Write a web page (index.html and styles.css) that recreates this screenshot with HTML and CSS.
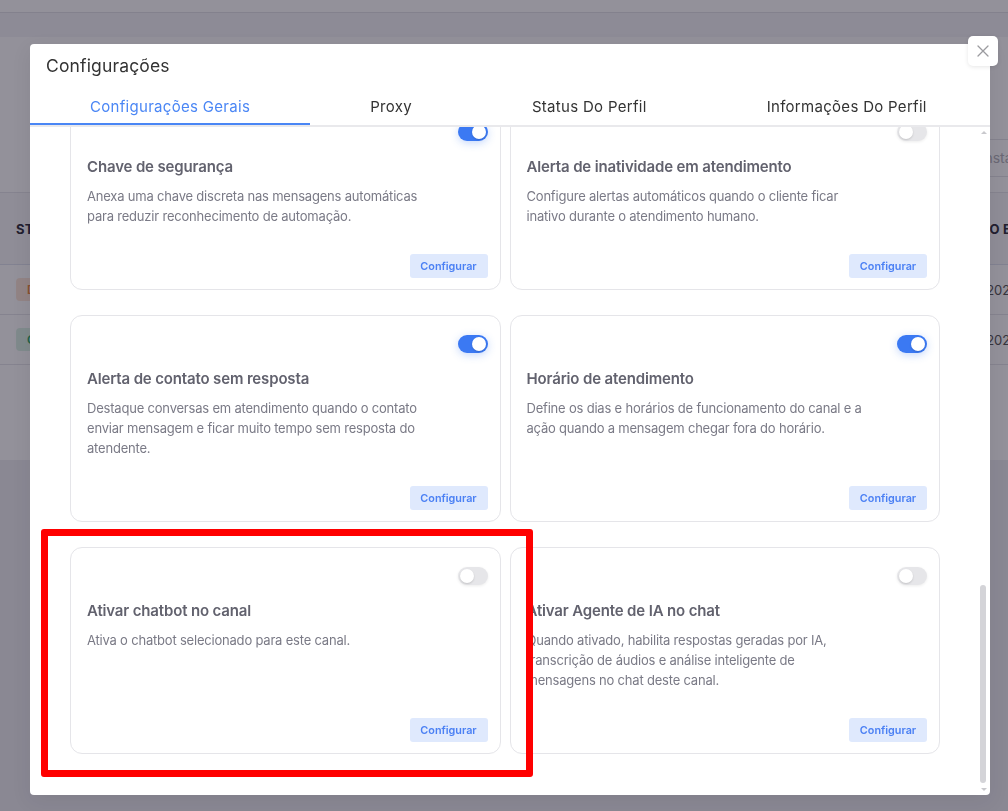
FILE: index.html
```html
<!DOCTYPE html>
<html lang="pt-BR">
<head>
<meta charset="utf-8">
<title>Configurações</title>
<link rel="stylesheet" href="styles.css">
</head>
<body>
  <div class="page">
    <div class="page-top"></div>
    <div class="page-band"></div>
    <section class="page-card">
      <div class="page-toolbar">
        <div class="search">Buscar instalação</div>
      </div>
      <div class="table">
        <div class="tr th"><span>STATUS</span><span>CRIADO EM</span></div>
        <div class="tr"><span><em class="badge badge-warn">Desconectado</em></span><span>14/02/2025 09:12</span></div>
        <div class="tr"><span><em class="badge badge-ok">Conectado</em></span><span>14/02/2025 10:47</span></div>
      </div>
    </section>
  </div>

  <div class="overlay"></div>

  <div class="modal" role="dialog" aria-label="Configurações">
    <button class="modal-close" aria-label="Fechar">
      <svg width="12" height="12" viewBox="0 0 12 12"><path d="M1 1L11 11M11 1L1 11" stroke="#9b9b9f" stroke-width="1.3" stroke-linecap="round"/></svg>
    </button>
    <h2 class="modal-title">Configurações</h2>
    <nav class="tabs">
      <span class="tab active">Configurações Gerais</span>
      <span class="tab">Proxy</span>
      <span class="tab">Status Do Perfil</span>
      <span class="tab">Informações Do Perfil</span>
    </nav>
    <div class="modal-body">
      <div class="cards">
        <article class="card">
          <span class="switch on"><i></i></span>
          <h3 class="card-title">Chave de segurança</h3>
          <p class="card-desc">Anexa uma chave discreta nas mensagens automáticas para reduzir reconhecimento de automação.</p>
          <button class="card-btn">Configurar</button>
        </article>
        <article class="card">
          <span class="switch"><i></i></span>
          <h3 class="card-title">Alerta de inatividade em atendimento</h3>
          <p class="card-desc">Configure alertas automáticos quando o cliente ficar inativo durante o atendimento humano.</p>
          <button class="card-btn">Configurar</button>
        </article>
        <article class="card">
          <span class="switch on"><i></i></span>
          <h3 class="card-title">Alerta de contato sem resposta</h3>
          <p class="card-desc">Destaque conversas em atendimento quando o contato enviar mensagem e ficar muito tempo sem resposta do atendente.</p>
          <button class="card-btn">Configurar</button>
        </article>
        <article class="card">
          <span class="switch on"><i></i></span>
          <h3 class="card-title">Horário de atendimento</h3>
          <p class="card-desc">Define os dias e horários de funcionamento do canal e a ação quando a mensagem chegar fora do horário.</p>
          <button class="card-btn">Configurar</button>
        </article>
        <article class="card">
          <span class="switch"><i></i></span>
          <h3 class="card-title">Ativar chatbot no canal</h3>
          <p class="card-desc">Ativa o chatbot selecionado para este canal.</p>
          <button class="card-btn">Configurar</button>
        </article>
        <article class="card">
          <span class="switch"><i></i></span>
          <h3 class="card-title">Ativar Agente de IA no chat</h3>
          <p class="card-desc">Quando ativado, habilita respostas geradas por IA, transcrição de áudios e análise inteligente de mensagens no chat deste canal.</p>
          <button class="card-btn">Configurar</button>
        </article>
      </div>
      <div class="scrollbar">
        <span class="sb-arrow sb-up"></span>
        <span class="sb-thumb"></span>
        <span class="sb-arrow sb-down"></span>
      </div>
    </div>
  </div>

  <div class="annotation"></div>
</body>
</html>
```
FILE: styles.css
```css
* { box-sizing: border-box; }

html, body {
  margin: 0;
  height: 811px;
  overflow: hidden;
}

body {
  font-family: Inter, "Noto Sans", sans-serif;
  background: #efeff3;
  color: #333;
}

/* ---------- underlying page ---------- */
.page-top {
  height: 13px;
  background: #fff;
  border-bottom: 1px solid #e2e2e7;
}
.page-band {
  height: 24px;
  background: #f4f4f7;
}
.page-card {
  height: 423px;
  background: #fff;
}
.page-toolbar {
  height: 156px;
  padding-top: 102px;
  display: flex;
  justify-content: flex-end;
  border-bottom: 1px solid #e6e6ea;
  overflow: hidden;
}
.search {
  flex: 0 0 auto;
  width: 200px;
  margin-right: -108px;
  height: 38px;
  border-top: 1px solid #e4e4e8;
  border-bottom: 1px solid #e4e4e8;
  border-left: 1px solid #e4e4e8;
  padding-left: 14px;
  line-height: 36px;
  font-size: 14px;
  color: #b4b4bb;
  white-space: nowrap;
}
.table .tr {
  display: grid;
  grid-template-columns: 1fr 61px;
  align-items: center;
  height: 50px;
  padding-left: 16px;
  border-bottom: 1px solid #e6e6ea;
  font-size: 13px;
  color: #555;
  white-space: nowrap;
}
.table .th {
  height: 72px;
  background: #f8f8fa;
  font-weight: 700;
  color: #2f2f3a;
  letter-spacing: .3px;
  border-bottom-color: #dfe3ee;
}
.badge {
  display: inline-block;
  font-style: normal;
  font-size: 12px;
  font-weight: 600;
  height: 23px;
  line-height: 23px;
  padding: 0 11px;
  border-radius: 4px;
}
.badge-warn { background: #fde7d9; color: #ec8a3c; }
.badge-ok { background: #dcf3e6; color: #2fa866; }

/* ---------- overlay + modal ---------- */
.overlay {
  position: fixed;
  inset: 0;
  background: rgba(20, 15, 35, 0.46);
}

.modal {
  position: fixed;
  left: 30px;
  top: 44px;
  width: 960px;
  height: 751px;
  background: #fff;
  border-radius: 4px;
  display: flex;
  flex-direction: column;
  box-shadow: 0 6px 20px rgba(0, 0, 0, 0.08);
}

.modal-close {
  position: absolute;
  top: -8px;
  right: -8px;
  width: 30px;
  height: 30px;
  padding: 0;
  border: 0;
  border-radius: 5px;
  background: #fff;
  display: grid;
  place-items: center;
  box-shadow: 0 1px 4px rgba(0, 0, 0, 0.1);
}

.modal-title {
  margin: 0;
  padding: 10px 16px 0;
  font-size: 17.5px;
  line-height: 24px;
  font-weight: 400;
  letter-spacing: .15px;
  color: #333;
}

.tabs {
  display: flex;
  margin-top: 9px;
  border-bottom: 2px solid #e9e9ec;
}
.tab {
  padding: 10px 60px 6px;
  font-size: 15px;
  line-height: 20px;
  letter-spacing: .3px;
  color: #333;
  border-bottom: 2px solid transparent;
  white-space: nowrap;
}
.tab.active {
  color: #4a86f5;
  border-bottom-color: #4a86f5;
}

.modal-body {
  position: relative;
  flex: 1;
  overflow: hidden;
}

.cards {
  display: grid;
  grid-template-columns: 1fr 1fr;
  column-gap: 9px;
  row-gap: 25px;
  padding: 0 50px 0 40px;
  margin-top: -24px; /* current scroll position */
}

.card {
  display: flex;
  flex-direction: column;
  border: 1px solid #e5e5e9;
  border-radius: 12px;
  padding: 19px 12px 11px 16px;
}

.switch {
  align-self: flex-end;
  display: flex;
  width: 30px;
  height: 18px;
  padding: 2px;
  border-radius: 9px;
  background: #e6e6e9;
  box-shadow: 0 1px 3px rgba(0, 0, 0, 0.08);
}
.switch i {
  width: 14px;
  height: 14px;
  border-radius: 50%;
  background: #fff;
  box-shadow: 0 1px 2px rgba(0, 0, 0, 0.15);
}
.switch.on {
  justify-content: flex-end;
  background: #3b79f3;
  box-shadow: 0 2px 8px rgba(59, 121, 243, 0.3);
}

.card-title {
  margin: 15px 0 0;
  font-size: 15px;
  line-height: 22px;
  font-weight: 600;
  letter-spacing: -.15px;
  color: #62626e;
}

.card-desc {
  margin: 8px 0 28px;
  max-width: 338px;
  font-size: 13px;
  line-height: 20px;
  letter-spacing: -.2px;
  color: #7a7a86;
}

.card-btn {
  margin-top: auto;
  align-self: flex-end;
  width: 78px;
  height: 24px;
  padding: 0;
  border: 0;
  border-radius: 3px;
  background: #dfe9fd;
  color: #4b80f4;
  font-family: inherit;
  font-size: 10.8px;
  font-weight: 600;
  letter-spacing: 0;
}

/* scrollbar indicator */
.scrollbar {
  position: absolute;
  top: 0;
  right: 1px;
  bottom: 0;
  width: 10px;
}
.sb-arrow {
  position: absolute;
  left: 2px;
  width: 0;
  height: 0;
  border-left: 3px solid transparent;
  border-right: 3px solid transparent;
}
.sb-up { top: 4px; border-bottom: 3px solid #c9c9cd; }
.sb-down { bottom: 4px; border-top: 3px solid #c9c9cd; }
.sb-thumb {
  position: absolute;
  top: 458px;
  left: 1px;
  width: 6px;
  height: 198px;
  border-radius: 3px;
  background: #d4d4d8;
}

/* red highlight annotation */
.annotation {
  position: fixed;
  left: 41px;
  top: 529px;
  width: 492px;
  height: 248px;
  border: 7px solid #ff0000;
  border-radius: 3px;
}
```
